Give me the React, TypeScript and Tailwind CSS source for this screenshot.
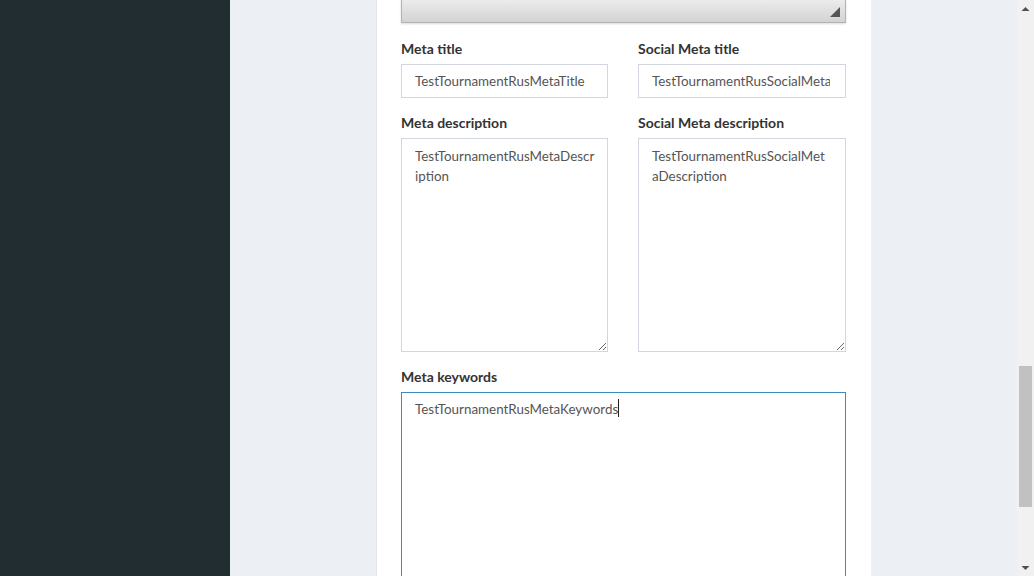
import React from "react";

const font = { fontFamily: "Lato, 'Open Sans', sans-serif" };

function Label({ children }: { children: React.ReactNode }) {
  return (
    <label className="block text-[14px] leading-[20px] font-bold text-[#333]">
      {children}
    </label>
  );
}

function TextInput({ value, className = "pr-[13px]" }: { value: string; className?: string }) {
  return (
    <input
      readOnly
      defaultValue={value}
      className={`mt-[5px] block h-[34px] w-full border border-[#d2d6de] bg-white pb-[1px] pl-[13px] text-[13.4px] text-[#555] outline-none ${className}`}
      style={font}
    />
  );
}

function TextArea({ value, className }: { value: string; className: string }) {
  return (
    <textarea
      readOnly
      defaultValue={value}
      className={`mt-[5px] block h-[214px] w-full resize-y border border-[#d2d6de] bg-white py-[7px] pl-[13px] text-[13.4px] leading-[20px] text-[#555] outline-none ${className}`}
      style={font}
    />
  );
}

function Scrollbar() {
  return (
    <div className="flex w-[17px] flex-col items-center bg-[#f1f1f1]">
      <svg width="17" height="17" viewBox="0 0 17 17" className="shrink-0">
        <path d="M4.5 11 L8.5 7 L12.5 11 Z" fill="#505050" />
      </svg>
      <div className="h-[349px] shrink-0" />
      <div className="h-[141px] w-[13px] shrink-0 bg-[#c1c1c1]" />
      <div className="flex-1" />
      <svg width="17" height="17" viewBox="0 0 17 17" className="shrink-0">
        <path d="M4.5 7 L8.5 11 L12.5 7 Z" fill="#505050" />
      </svg>
    </div>
  );
}

export default function App() {
  return (
    <div className="flex h-[576px] w-[1034px] overflow-hidden" style={font}>
      <aside className="w-[230px] shrink-0 bg-[#222d32]" />
      <main className="flex flex-1 bg-[#ecf0f5]">
        <div className="ml-[146px] w-[495px] border-l border-[#e3e6eb] bg-white pr-[25px] pl-[24px]">
          <div className="relative h-[23px] border-x border-b border-[#b3b3b3] bg-gradient-to-b from-[#ececec] to-[#d3d3d3] shadow-[0_1px_2px_rgba(0,0,0,0.15)]">
            <svg width="10" height="10" viewBox="0 0 10 10" className="absolute right-[5px] bottom-[5px]">
              <path d="M10 0 L10 10 L0 10 Z" fill="#555" />
            </svg>
          </div>

          <div className="grid grid-cols-[207px_1fr] gap-x-[30px]">
            <div className="mt-[16px]">
              <Label>Meta title</Label>
              <TextInput value="TestTournamentRusMetaTitle" />
            </div>
            <div className="mt-[16px]">
              <Label>Social Meta title</Label>
              <TextInput value="TestTournamentRusSocialMetaTitle" className="pr-[15px]" />
            </div>
            <div className="mt-[15px]">
              <Label>Meta description</Label>
              <TextArea value="TestTournamentRusMetaDescription" className="pr-[11px]" />
            </div>
            <div className="mt-[15px]">
              <Label>Social Meta description</Label>
              <TextArea value="TestTournamentRusSocialMetaDescription" className="pr-[18px]" />
            </div>
          </div>

          <div className="mt-[15px]">
            <Label>Meta keywords</Label>
            <div className="mt-[5px] h-[214px] border border-[#3c8dbc] bg-white px-[13px] pt-[6px] text-[13.4px] leading-[20px] text-[#555]">
              <span className="align-top">TestTournamentRusMetaKeywords</span>
              <span className="inline-block h-[18px] w-px bg-[#222] align-top" />
            </div>
          </div>
        </div>
      </main>
      <Scrollbar />
    </div>
  );
}
